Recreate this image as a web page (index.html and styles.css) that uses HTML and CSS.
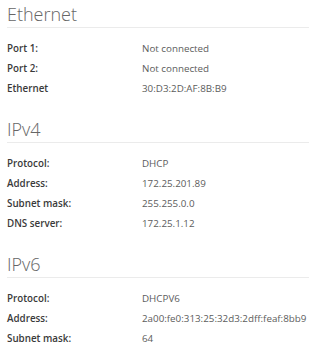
FILE: index.html
```html
<!DOCTYPE html>
<html>

<head>
  <title>Network status</title>
  <link rel="stylesheet" href="styles.css">
</head>

<body>
  <div class="section">
    <h2>Ethernet</h2>
    <table class="info">
      <tr><th>Port 1:</th><td>Not connected</td></tr>
      <tr><th>Port 2:</th><td>Not connected</td></tr>
      <tr><th>Ethernet</th><td>30:D3:2D:AF:8B:B9</td></tr>
    </table>
  </div>

  <div class="section">
    <h2>IPv4</h2>
    <table class="info">
      <tr><th>Protocol:</th><td>DHCP</td></tr>
      <tr><th>Address:</th><td>172.25.201.89</td></tr>
      <tr><th>Subnet mask:</th><td>255.255.0.0</td></tr>
      <tr><th>DNS server:</th><td>172.25.1.12</td></tr>
    </table>
  </div>

  <div class="section">
    <h2>IPv6</h2>
    <table class="info">
      <tr><th>Protocol:</th><td>DHCPV6</td></tr>
      <tr><th>Address:</th><td>2a00:fe0:313:25:32d3:2dff:feaf:8bb9</td></tr>
      <tr><th>Subnet mask:</th><td>64</td></tr>
    </table>
  </div>
</body>

</html>
```

FILE: styles.css
```css
body {
font-family: "Open Sans", Arial, sans-serif;
margin: 0;
padding: 0 0 0 7px;
background-color: #fff;
}

.section {
margin-bottom: 16px;
}

h2 {
margin: 0;
padding: 2px 0 1px 0;
font-size: 18px;
line-height: 24px;
font-weight: 300;
color: #666;
border-bottom: 1px solid #ebebeb;
}

.info {
margin-top: 11px;
border-collapse: collapse;
}

.info th {
width: 135px;
padding: 0;
text-align: left;
font-size: 9.8px;
line-height: 20px;
font-weight: 600;
color: #3a3a3a;
}

.info td {
padding: 0;
font-size: 9.8px;
line-height: 20px;
color: #5c5c5c;
}
```
